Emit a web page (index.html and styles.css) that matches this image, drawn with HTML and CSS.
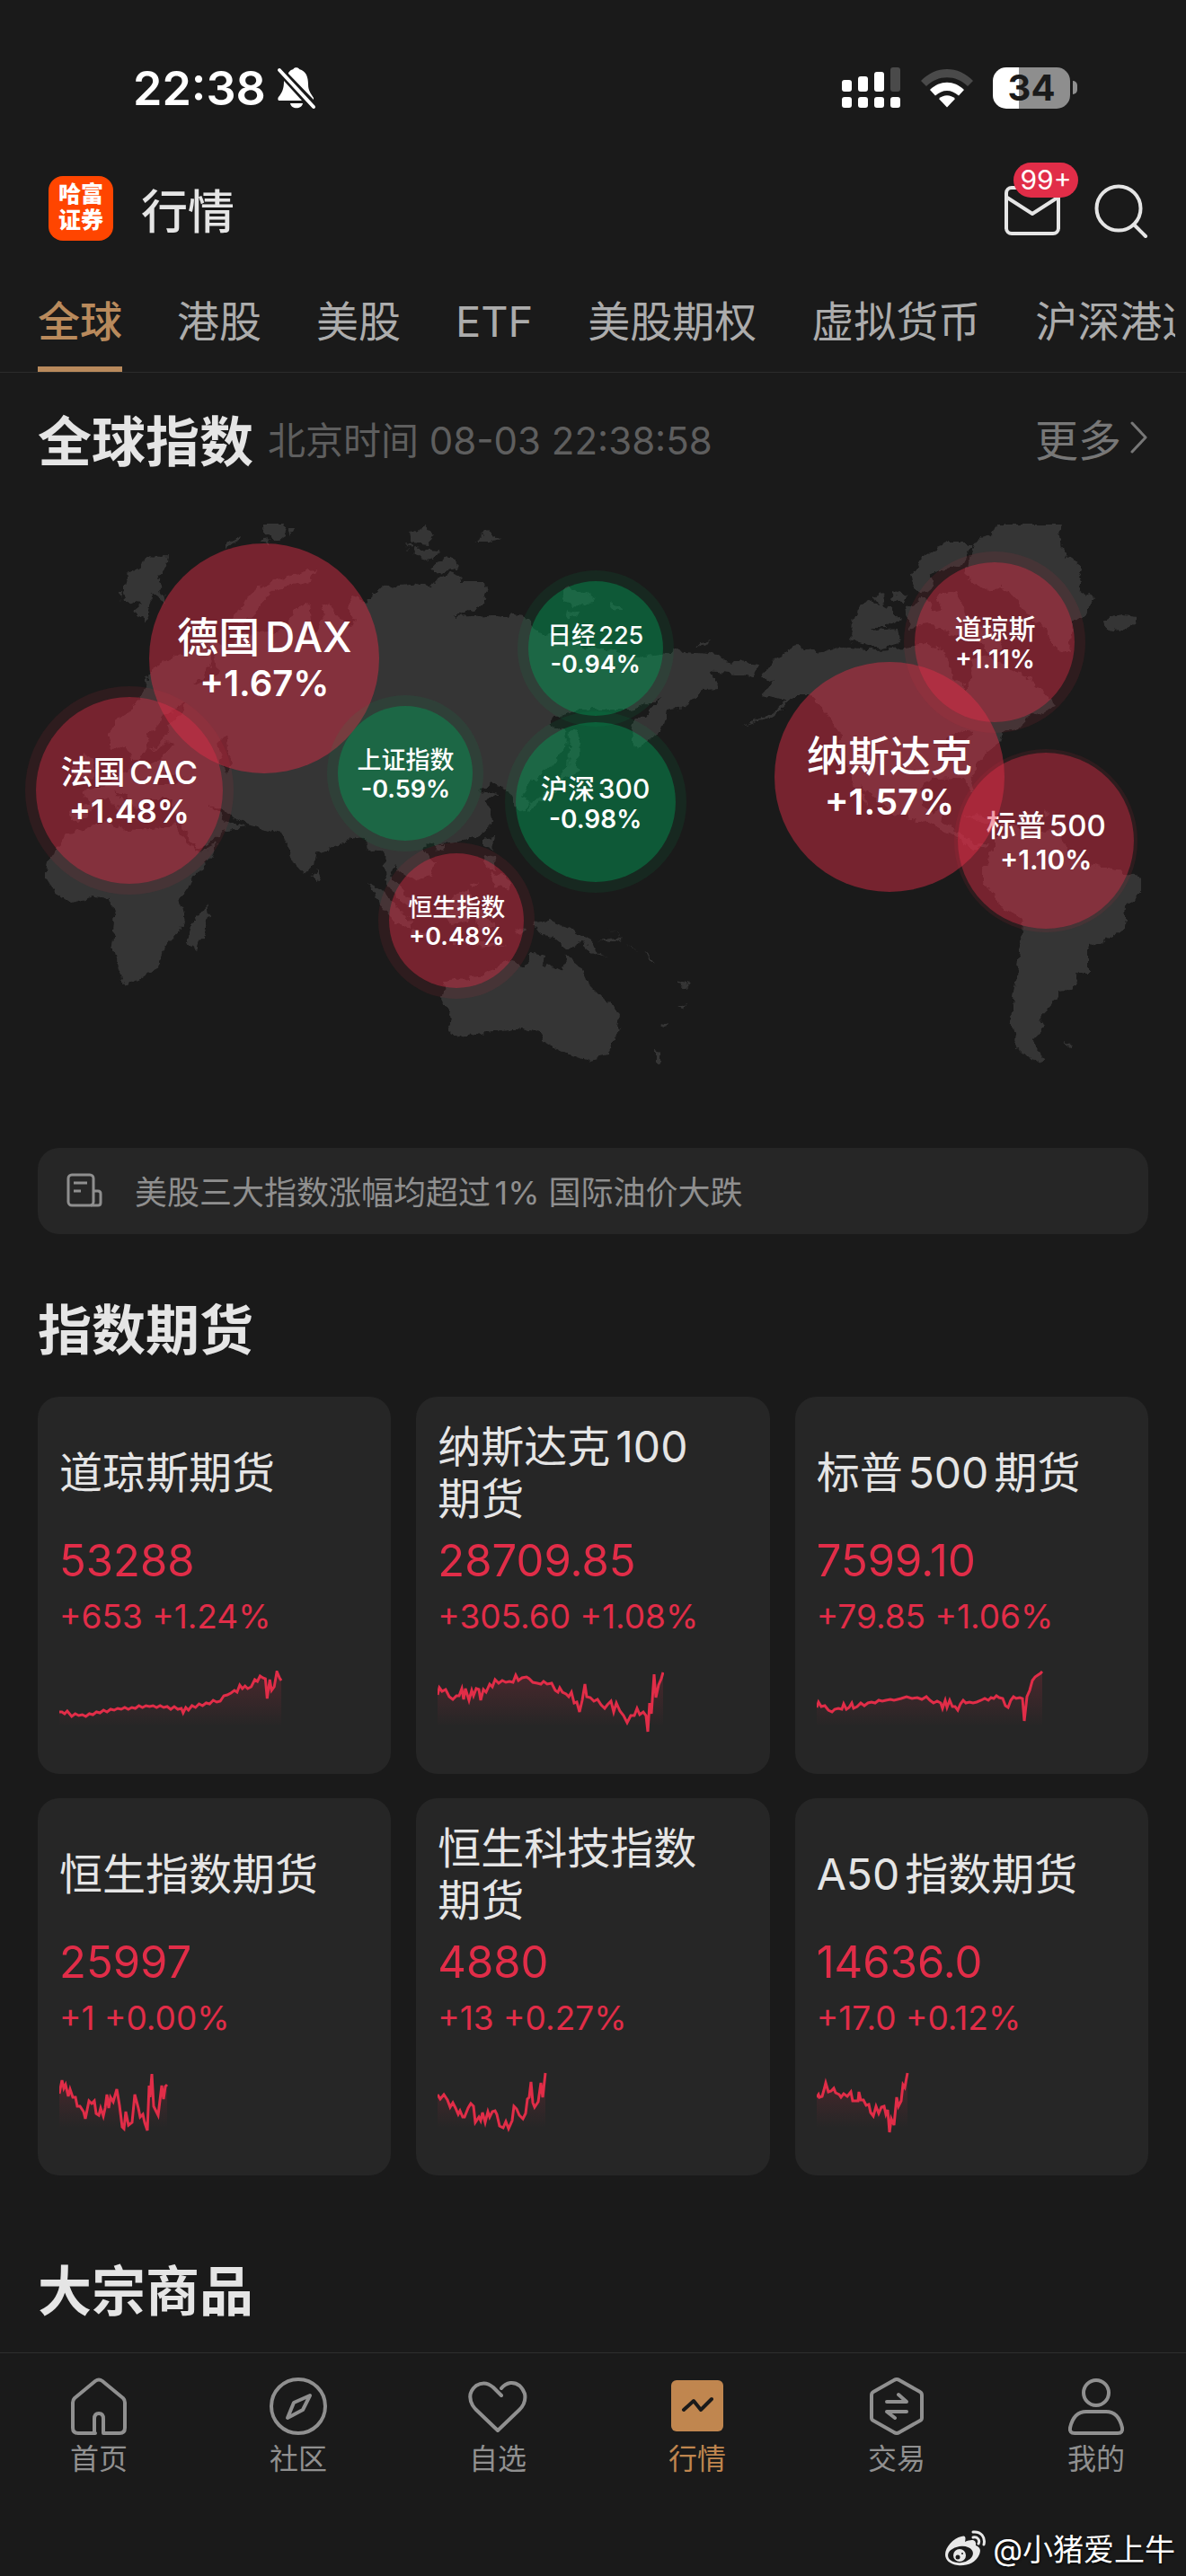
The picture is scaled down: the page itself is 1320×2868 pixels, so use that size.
FILE: index.html
```html
<!DOCTYPE html>
<html lang="zh-CN">
<head>
    <meta charset="UTF-8">
    <meta name="viewport" content="width=device-width, initial-scale=1">
    <title>行情</title>
    <link rel="stylesheet" href="styles.css">
</head>
<body>
    <!-- 状态栏 -->
    <div class="status">
        <div class="status-left">
            <span class="clock">22:38</span>
            <svg class="bell" width="44" height="48" viewBox="0 0 44 48">
                <path fill="#fff" d="M13 7C15 4 17 3.500 18.500 3C19 .5 24.500 .5 25 3C33 5 35 12 35 20C35 27 38 30 41 35V37L13 8Z"/>
                <path fill="#fff" d="M8 16L28 38H3C1 38 1 35.500 2 34C6 29 8 25 8 16ZM15 41H29C28 48 16 48 15 41Z"/>
                <path stroke="#fff" stroke-width="4" stroke-linecap="round" d="M3 4L41 45"/>
            </svg>
        </div>
        <div class="status-right">
            <svg width="66" height="46" viewBox="0 0 66 46">
                <g fill="#fff">
                    <rect x="0" y="14" width="11" height="13" rx="3"/>
                    <rect x="18" y="10" width="11" height="17" rx="3"/>
                    <rect x="36" y="5" width="11" height="22" rx="3"/>
                    <rect x="0" y="33" width="11" height="12" rx="3"/>
                    <rect x="18" y="33" width="11" height="12" rx="3"/>
                    <rect x="36" y="33" width="11" height="12" rx="3"/>
                    <rect x="54" y="33" width="11" height="12" rx="3"/>
                </g>
                <rect x="54" y="0" width="11" height="27" rx="3" fill="#4a4a4a"/>
            </svg>
            <svg width="58" height="44" viewBox="0 0 58 44">
                <path fill="#4a4a4a" d="M0 14C16 -3.500 42 -3.500 58 14L52 20C39 7 19 7 6 20Z"/>
                <path fill="#fff" d="M10 24C21 13 37 13 48 24L42 30.500C34 23 24 23 16 30.500Z"/>
                <path fill="#fff" d="M20 34C25 29 33 29 38 34L29 43.500Z"/>
            </svg>
            <div class="battery"><span>34</span></div>
        </div>
    </div>

    <!-- 顶部标题 -->
    <header class="appbar">
        <div class="logo">哈富<br>证券</div>
        <h1>行情</h1>
        <div class="tools">
            <button class="tool" type="button" aria-label="消息">
                <svg width="62" height="56" viewBox="0 0 62 56" fill="none" stroke="#e5e5e5" stroke-width="4" stroke-linejoin="round">
                    <rect x="2" y="2" width="58" height="51" rx="6"/>
                    <path d="M3 13L31 31L59 13"/>
                </svg>
                <span class="badge">99+</span>
            </button>
            <button class="tool" type="button" aria-label="搜索">
                <svg width="60" height="60" viewBox="0 0 60 60" fill="none" stroke="#e5e5e5" stroke-width="4" stroke-linecap="round">
                    <circle cx="27" cy="27" r="24.500"/>
                    <path d="M44 45L57 58"/>
                </svg>
            </button>
        </div>
    </header>

    <nav class="tabbar">
        <div class="tabs">
            <button class="tab on" type="button">全球</button>
            <button class="tab" type="button">港股</button>
            <button class="tab" type="button">美股</button>
            <button class="tab" type="button">ETF</button>
            <button class="tab" type="button">美股期权</button>
            <button class="tab" type="button">虚拟货币</button>
            <button class="tab" type="button">沪深港通</button>
        </div>
    </nav>

    <main>
        <!-- 全球指数 -->
        <section>
            <div class="sec-head">
                <h2>全球指数</h2>
                <time class="now">北京时间 08-03 22:38:58</time>
                <a class="more" href="#">更多
                    <svg width="20" height="36" viewBox="0 0 20 36" fill="none" stroke="#777" stroke-width="3" stroke-linecap="round" stroke-linejoin="round"><path d="M2 2L17 18L2 34"/></svg>
                </a>
            </div>

            <div class="map">
                <svg class="land" viewBox="0 565 1320 675">
                    <defs>
                        <!-- 海岸线毛边 -->
                        <filter id="coast" x="0" y="0" width="100%" height="100%">
                            <feTurbulence type="fractalNoise" baseFrequency="0.09" numOctaves="3" seed="4"/>
                            <feDisplacementMap in="SourceGraphic" scale="11" xChannelSelector="R" yChannelSelector="G"/>
                        </filter>
                    </defs>
                    <g fill="#363636" filter="url(#coast)">
                        <!-- 欧亚大陆 -->
                        <path d="M168 748L182 738L198 730L227 720L240 714L256 722L262 712L272 706L300 704L318 700L325 684L333 675L345 672L347 690L340 706L352 704L360 690L358 678L368 674L378 688L390 700L396 690L386 676L394 664L410 670L412 663L429 652L455 650L480 653L488 643L501 637L515 642L511 648L541 648L544 660L539 673L522 680L505 687L547 685L566 688L568 684L589 690L598 703L625 708L650 720L680 724L706 732L746 728L752 723L799 727L807 735L843 740L839 753L811 750L790 748L799 767L782 768L761 787L742 790L740 803L736 815L723 823L710 833L702 810L706 800L719 797L736 777L702 790L660 790L644 790L626 795L610 805L631 817L630 832L606 860L588 874L580 886L586 890L587 902L575 904L569 884L549 872L534 880L555 883L539 892L547 900L548 917L534 930L509 937L490 939L472 942L484 963L480 973L463 982L446 970L438 962L434 973L446 987L460 1005L455 1010L440 998L429 980L427 950L421 945L410 947L408 933L391 932L370 943L351 950L349 963L337 973L328 963L314 928L290 922L274 917L253 907L240 898L232 896L252 914L274 921L253 924L234 940L217 947L206 926L198 908L190 904L192 890L165 890L160 896L152 902L140 886L128 882L142 900L136 904L120 888L108 892L98 906L88 916L78 914L80 900L98 898L93 880L112 876L124 868L142 862L148 850L172 850L188 836L196 826L186 824L172 838L162 830L156 846L146 846L138 830L124 836L122 820L130 800L151 787L160 767Z"/>
                        <!-- 非洲 -->
                        <path d="M80 927L118 915L126 918L139 924L168 923L194 919L206 935L217 950L240 940L236 953L215 977L200 1000L206 1027L187 1047L177 1075L156 1090L139 1096L135 1090L125 1053L128 1027L123 1000L105 998L78 1005L59 992L50 977L53 960L65 942Z"/>
                        <path d="M229 1009L233 1018L225 1044L218 1056L209 1050L212 1030Z"/>
                        <path d="M352 966L358 980L352 984L346 976Z"/>
                        <path d="M95 837L104 846L104 866L90 868L94 856ZM84 850L90 854L84 864L78 860Z"/>
                        <!-- 北极岛屿 -->
                        <path d="M162 619L180 620L188 618L186 632L176 645L180 660L184 672L176 664L170 660L166 672L164 692L148 680L158 672L142 670L138 654L142 640L150 632L158 634Z"/>
                        <path d="M132 660L138 660L136 668Z"/>
                        <path d="M293 583H314L318 596L308 604L294 592ZM320 588L328 588L324 596ZM250 606L268 597L266 602L250 610ZM288 602L300 600L298 605Z"/>
                        <path d="M261 690L272 668L285 655L310 645L351 633L345 646L320 652L300 662L282 682L270 694Z"/>
                        <path d="M456 594L474 587L482 598L478 606L458 604ZM450 604L458 606L456 611ZM458 610L488 613L482 624L464 618ZM480 634L498 618L511 632L494 636ZM530 604L544 590L556 600L542 604Z"/>
                        <path d="M624 660L632 652L650 660L662 668L640 674L628 670ZM676 670L692 674L696 680L682 678ZM630 680L645 684L632 690ZM775 717L792 711L790 716L776 720Z"/>
                        <!-- 格陵兰 / 北美 -->
                        <path d="M1110 583H1182L1180 596L1182 610L1190 622L1207 633L1199 653L1218 667L1207 684L1193 694L1190 727L1172 720L1164 700L1150 690L1130 665L1115 655L1095 657L1074 640L1085 603L1104 596Z"/>
                        <path d="M1022 627L1036 613L1056 605L1083 605L1070 630L1046 634L1026 643ZM1012 640L1024 630L1042 648L1034 662L1018 658Z"/>
                        <path d="M952 682L966 668L990 676L1002 690L986 698L964 698L946 706ZM948 694L960 690L975 702L998 700L1004 716L980 722L946 712ZM996 658L1010 664L1006 674L994 668ZM972 664L984 660L980 674ZM1008 676L1028 664L1040 680L1060 676L1070 696L1052 702L1030 694L1012 700Z"/>
                        <path d="M1042 664L1064 658L1080 690L1104 700L1116 722L1100 728L1082 712L1058 706Z"/>
                        <path d="M858 740L872 726L887 720L913 728L938 720L974 724L1009 722L1030 716L1050 724L1056 736L1060 756L1076 768L1084 752L1080 734L1100 730L1122 744L1140 752L1161 770L1175 787L1160 792L1142 800L1136 812L1115 814L1110 828L1098 837L1090 850L1081 862L1086 882L1078 876L1070 866L1039 867L1026 873L1026 900L1040 904L1052 898L1048 916L1072 927L1082 940L1098 938L1096 944L1080 944L1064 930L1030 915L997 907L975 892L960 874L966 898L950 874L946 860L936 836L934 817L921 793L900 773L887 773L862 797L828 808L862 792L875 780L849 773L860 760L849 753Z"/>
                        <path d="M1070 908L1090 906L1108 914L1096 916ZM1112 918L1134 918L1128 924L1112 922ZM1160 900L1170 906L1164 910Z"/>
                        <path d="M1226 692L1248 684L1264 686L1262 698L1240 702L1230 700Z"/>
                        <!-- 南美 -->
                        <path d="M1106 933L1127 920L1150 926L1182 923L1186 943L1211 963L1249 970L1270 977L1270 993L1253 1010L1251 1033L1237 1043L1211 1053L1211 1083L1194 1082L1199 1093L1190 1101L1178 1102L1178 1110L1171 1118L1157 1133L1163 1143L1150 1157L1152 1166L1163 1177L1152 1182L1132 1166L1127 1150L1125 1133L1131 1093L1136 1053L1140 1023L1119 1013L1093 980L1093 967L1106 947Z"/>
                        <path d="M1184 1160L1192 1162L1188 1166Z"/>
                        <!-- 东南亚 / 大洋洲 -->
                        <path d="M410 984L422 990L440 1008L460 1028L456 1034L436 1020L422 1004ZM458 1036L484 1042L480 1046L460 1042Z"/>
                        <path d="M496 1006L510 994L524 990L526 1006L520 1026L504 1030L492 1020Z"/>
                        <path d="M534 1012L552 1006L540 1020L550 1034L540 1030L536 1040L530 1026ZM540 952L550 954L552 970L544 968ZM546 972L564 976L568 992L554 986ZM540 936L550 930L546 944L540 942ZM482 940L494 940L488 948ZM522 984L534 980L526 988Z"/>
                        <path d="M594 1028L612 1024L640 1036L658 1046L666 1062L677 1066L660 1062L648 1050L632 1058L616 1044L604 1042ZM500 1048L540 1048L566 1052L540 1054ZM574 1034L584 1036L580 1040Z"/>
                        <path d="M666 1048L690 1044L676 1034L692 1046L680 1050ZM698 1050L704 1054L710 1060ZM716 1058L724 1066L732 1074L724 1070ZM754 1092L764 1094L766 1100L758 1098ZM754 1120L762 1116L760 1122ZM734 1140L744 1136L742 1142Z"/>
                        <path d="M494 1093L534 1087L551 1077L566 1071L583 1075L593 1062L606 1064L604 1072L625 1083L631 1062L644 1073L652 1092L677 1117L690 1130L687 1150L675 1175L652 1180L635 1175L619 1167L606 1158L600 1150L590 1147L581 1145L543 1150L511 1154L498 1148L503 1133L492 1110Z"/>
                        <path d="M730 1168L736 1170L736 1184L730 1186Z"/>
                        <!-- 日本 -->
                        <path d="M634 814L644 812L646 838L640 850L646 860L628 866L622 880L602 892L590 904L588 896L612 880L632 856Z"/>
                    </g>
                    <!-- 内海 -->
                    <g fill="#1a1a1a" filter="url(#coast)">
                        <path d="M160 830L170 812L184 796L206 782L206 790L188 806L184 820L172 836Z"/>
                        <path d="M214 762L228 752L236 734L228 720L240 728L242 752L226 760Z"/>
                        <path d="M242 828L252 818L254 836L260 850L250 862L246 844Z"/>
                        <path d="M174 866L186 858L204 866L192 874L176 874Z"/>
                        <path d="M1046 826L1064 814L1084 816L1074 824L1062 832Z"/>
                    </g>
                </svg>

                <a class="dot up p2" href="#" style="left:88.200%;top:55%"><b>标普500</b><span>+1.10%</span></a>
                <a class="dot up p1" href="#" style="left:75%;top:44.500%"><b>纳斯达克</b><span>+1.57%</span></a>
                <a class="dot up p3" href="#" style="left:83.900%;top:22.200%"><b>道琼斯</b><span>+1.11%</span></a>
                <a class="dot up p1" href="#" style="left:22.300%;top:24.900%"><b>德国DAX</b><span>+1.67%</span></a>
                <a class="dot up p4" href="#" style="left:10.900%;top:46.600%"><b>法国CAC</b><span>+1.48%</span></a>
                <a class="dot down p5" href="#" style="left:34.200%;top:43.900%"><b>上证指数</b><span>-0.59%</span></a>
                <a class="dot down p5" href="#" style="left:50.200%;top:23.300%"><b>日经225</b><span>-0.94%</span></a>
                <a class="dot down p3" href="#" style="left:50.200%;top:48.600%"><b>沪深300</b><span>-0.98%</span></a>
                <a class="dot up p5" href="#" style="left:38.500%;top:68.100%"><b>恒生指数</b><span>+0.48%</span></a>
            </div>

            <a class="news" href="#">
                <svg width="40" height="38" viewBox="0 0 40 38" fill="none" stroke="#8f8f8f" stroke-width="3" stroke-linejoin="round">
                    <rect x="2" y="2" width="28" height="34" rx="4"/>
                    <path d="M30 20H35Q38 20 38 23V33Q38 36 35 36H27M8 11H23M8 20H16"/>
                </svg>
                <span>美股三大指数涨幅均超过1% 国际油价大跌</span>
            </a>
        </section>

        <!-- 指数期货 -->
        <section>
            <h2 class="sec-title">指数期货</h2>
            <svg class="defs" width="0" height="0">
                <linearGradient id="fade" x1="0" y1="0" x2="0" y2="62" gradientUnits="userSpaceOnUse">
                    <stop offset="0" stop-color="#e12d48" stop-opacity=".2"/>
                    <stop offset="1" stop-color="#e12d48" stop-opacity="0"/>
                </linearGradient>
            </svg>
            <div class="cards">
                <a class="card" href="#">
                    <h3>道琼斯期货</h3>
                    <p class="price">53288</p>
                    <p class="chg">+653 +1.24%</p>
                    <svg class="spark" width="252" height="70" viewBox="0 0 256 70" preserveAspectRatio="none"><polyline points="0,46 3,46 6,48 9,45 14,51 18,48 22,50 26,49 30,51 34,48 38,49 42,46 46,47 50,44 54,46 58,43 62,44 66,42 70,43 74,41 78,43 82,41 86,42 90,39 94,41 98,39 102,40 106,39 110,41 114,39 118,41 122,40 126,43 130,40 134,43 138,42 140,47 143,41 146,44 150,39 154,41 158,37 162,39 166,36 170,37 174,33 178,35 182,34 186,28 190,27 194,25 198,22 201,24 204,16 207,20 210,17 213,20 217,18 221,10 224,12 227,6 230,8 233,9 235,31 238,10 240,22 243,18 246,1 249,8 251,11"/></svg>
                </a>
                <a class="card" href="#">
                    <h3>纳斯达克100期货</h3>
                    <p class="price">28709.85</p>
                    <p class="chg">+305.60 +1.08%</p>
                    <svg class="spark" width="252" height="70" viewBox="0 0 252 70"><polyline points="0,27 2,19 5,23 9,21 13,29 17,32 21,28 24,28 27,20 29,32 31,20 35,33 38,22 40,28 43,20 46,21 48,33 51,21 54,24 58,15 61,18 64,10 68,14 72,11 76,13 80,12 84,13 87,5 90,11 94,8 99,7 102,9 106,13 111,14 115,15 118,12 122,15 127,14 131,22 134,24 136,19 139,24 143,26 146,29 149,24 152,36 155,35 158,46 161,33 164,15 166,29 170,30 174,34 178,32 182,38 186,42 189,38 193,34 196,46 199,36 203,45 207,50 211,58 215,50 219,50 222,42 225,49 229,46 232,50 234,68 236,36 238,48 241,4 243,30 246,16 249,9 251,2"/></svg>
                </a>
                <a class="card" href="#">
                    <h3>标普500期货</h3>
                    <p class="price">7599.10</p>
                    <p class="chg">+79.85 +1.06%</p>
                    <svg class="spark" width="252" height="70" viewBox="0 0 252 70"><polyline points="0,41 2,35 5,40 9,39 13,44 17,46 20,43 24,42 28,43 30,37 33,43 36,41 39,36 41,42 45,40 49,36 53,39 57,36 61,35 65,36 69,33 73,34 77,33 82,32 86,33 90,32 94,31 100,29 106,31 112,30 117,32 122,29 126,33 130,36 134,34 138,36 140,42 143,33 145,41 148,33 151,40 154,40 157,44 160,37 163,33 166,36 170,35 174,36 178,35 183,33 187,31 191,33 194,30 197,31 200,28 203,30 207,31 210,39 213,41 216,33 219,29 222,31 226,30 229,31 231,56 234,29 237,22 240,11 243,7 246,5 249,3 251,1"/></svg>
                </a>
                <a class="card" href="#">
                    <h3>恒生指数期货</h3>
                    <p class="price">25997</p>
                    <p class="chg">+1 +0.00%</p>
                    <svg class="spark" width="252" height="70" viewBox="0 0 252 70"><polyline points="0,24 3,9 5,18 7,14 10,27 12,19 15,28 18,28 20,38 23,38 27,44 29,52 33,32 36,35 39,32 41,46 44,48 46,40 49,49 51,40 53,25 55,40 57,28 60,33 64,19 67,37 70,61 72,63 74,44 77,59 81,56 84,25 88,40 90,50 93,47 95,56 98,65 100,15 101,28 103,2 105,38 107,42 110,48 114,15 116,30 118,16 120,14"/></svg>
                </a>
                <a class="card" href="#">
                    <h3>恒生科技指数期货</h3>
                    <p class="price">4880</p>
                    <p class="chg">+13 +0.27%</p>
                    <svg class="spark" width="252" height="70" viewBox="0 0 252 70"><polyline points="0,25 3,30 7,25 11,31 14,39 17,34 20,40 23,47 25,43 28,50 30,50 34,40 37,35 40,38 42,56 46,50 48,54 50,45 53,56 56,44 58,50 61,44 64,43 66,47 69,60 73,62 76,55 79,63 83,54 85,38 88,41 91,48 95,52 98,46 100,30 102,28 104,11 106,34 108,39 112,33 115,12 117,28 120,1"/></svg>
                </a>
                <a class="card" href="#">
                    <h3>A50指数期货</h3>
                    <p class="price">14636.0</p>
                    <p class="chg">+17.0 +0.12%</p>
                    <svg class="spark" width="252" height="70" viewBox="0 0 252 70"><polyline points="0,28 2,25 3,28 6,27 8,20 10,12 13,22 16,21 19,18 21,23 25,25 27,28 30,24 34,27 38,22 40,32 44,32 46,32 47,22 49,31 52,31 55,37 58,36 60,45 63,49 66,38 69,46 72,39 75,38 77,47 79,42 81,67 83,52 86,59 89,28 91,38 94,32 96,14 98,17 101,1"/></svg>
                </a>
            </div>
        </section>

        <h2 class="sec-title">大宗商品</h2>
    </main>

    <!-- 底部导航 -->
    <nav class="bottom">
        <a class="item" href="#">
            <svg viewBox="0 0 66 66"><path d="M29 63H10Q4 63 4 57V29Q4 26 6 24L29 5Q33 2 37 5L60 24Q62 26 62 29V57Q62 63 56 63H38V47Q38 41 33 41Q28 41 28 47V63"/></svg>
            首页
        </a>
        <a class="item" href="#">
            <svg viewBox="0 0 66 66"><circle cx="33" cy="33" r="30"/><path d="M46 21L28 29L21 46L38 37Z"/></svg>
            社区
        </a>
        <a class="item" href="#">
            <svg viewBox="0 0 66 66"><path d="M37 21L28 12Q19 4 9 10Q-2 19 5 32Q7 35 9 37L33 60L57 37Q65 29 63 19Q58 6 47 7Q41 8 37 13"/></svg>
            自选
        </a>
        <a class="item on" href="#">
            <svg viewBox="0 0 66 66"><rect x="4" y="4" width="58" height="57" rx="6" fill="#c0864f" stroke="none"/><path stroke="#1a1a1a" d="M18 37L29 27L37 37L49 25"/></svg>
            行情
        </a>
        <a class="item" href="#">
            <svg viewBox="0 0 66 66"><path d="M30 4Q33 2 36 4L59 17Q61 18 61 21V46Q61 48 59 49L36 62Q33 64 30 62L7 49Q5 48 5 46V21Q5 18 7 17ZM22 28H44L35 20M44 39H22L31 46"/></svg>
            交易
        </a>
        <a class="item" href="#">
            <svg viewBox="0 0 66 66"><circle cx="33" cy="18" r="14"/><path d="M22 39H44Q58 39 62 57Q63 63 57 63H9Q3 63 4 57Q8 39 22 39Z"/></svg>
            我的
        </a>
    </nav>

    <footer class="mark">
        <svg width="46" height="40" viewBox="0 0 46 40">
            <path fill="#e8e8e8" d="M18 7C23 5 23 9 22 13C29 10 35 10 34 17C39 19 40 22 38 27C34 37 23 40 14 39C5 38 0 33 0 27C0 19 9 9 18 7Z"/>
            <ellipse cx="17" cy="27" rx="14" ry="9" fill="#1a1a1a" transform="rotate(-8 17 27)"/>
            <circle cx="16" cy="28" r="7" fill="#e8e8e8"/>
            <circle cx="14" cy="30" r="2.500" fill="#1a1a1a"/><circle cx="19" cy="26" r="1" fill="#1a1a1a"/>
            <path fill="none" stroke="#e8e8e8" stroke-width="3" stroke-linecap="round" d="M31 2C40 1 45 8 43 16M31 8C36 7 39 11 37 15"/>
        </svg>
        <span>@小猪爱上牛</span>
    </footer>

    <script src="script.js"></script>
</body>
</html>
```

FILE: styles.css
```css
*{
    box-sizing: border-box;
}

body{
    display: flex;
    flex-direction: column;
    min-height: 100vh;
    margin: 0;
    background: #1a1a1a;
    color: #e5e5e5;
    font-family: Inter, "Noto Sans CJK SC", sans-serif;
    text-autospace: normal;
    overflow-x: hidden;
}

h1, h2, h3, p{
    margin: 0;
}

a{
    color: inherit;
    text-decoration: none;
}

button{
    padding: 0;
    border: 0;
    background: none;
    color: inherit;
    font: inherit;
}

svg{
    display: block;
    flex-shrink: 0;
}

/* 状态栏 */
.status{
    display: flex;
    justify-content: space-between;
    align-items: center;
    height: 150px;
    padding: 46px 122px 0 148px;
    color: #fff;
}

.status-left{
    display: flex;
    align-items: center;
    gap: 12px;
}

.status-right{
    display: flex;
    align-items: center;
    gap: 22px;
}

.clock{
    font-size: 52px;
    font-weight: 600;
}

.battery{
    position: relative;
    width: 86px;
    height: 46px;
    margin-right: 7px;
    border-radius: 15px;
    background: linear-gradient(90deg, #fff 34%, #8e8e8e 34%);
    color: #1a1a1a;
    font-size: 40px;
    font-weight: 700;
    line-height: 46px;
    text-align: center;
}

/* 电池头 */
.battery::after{
    content: "";
    position: absolute;
    top: 15px;
    right: -8px;
    width: 5px;
    height: 15px;
    border-radius: 0 5px 5px 0;
    background: #8e8e8e;
}

/* 顶部标题 */
.appbar{
    display: flex;
    align-items: center;
    height: 170px;
    padding: 0 42px 6px 54px;
}

.logo{
    width: 72px;
    height: 72px;
    padding-top: 6px;
    border-radius: 16px;
    background: #ff4500;
    color: #fff;
    font-size: 25px;
    font-weight: 900;
    line-height: 29px;
    text-align: center;
}

.appbar h1{
    margin-left: 31px;
    font-size: 52px;
    font-weight: 500;
}

.tools{
    display: flex;
    align-items: center;
    gap: 38px;
    margin-left: auto;
    padding-top: 6px;
}

.tool{
    position: relative;
}

.badge{
    position: absolute;
    top: -26px;
    left: 10px;
    width: 72px;
    height: 39px;
    border-radius: 20px;
    background: #e12d48;
    color: #fff;
    font-size: 30px;
    line-height: 39px;
    text-align: center;
}

/* 分类标签 */
.tabbar{
    padding-right: 12px;
    border-bottom: 1px solid #2b2b2b;
}

.tabs{
    display: flex;
    gap: 61px;
    padding-left: 42px;
    overflow: hidden;
}

.tab{
    flex-shrink: 0;
    height: 94px;
    padding-bottom: 18px;
    color: #acacac;
    font-size: 47px;
    line-height: 76px;
}

.tab.on{
    background: linear-gradient(#b98a5c, #b98a5c) bottom/100% 6px no-repeat;
    color: #b98a5c;
    font-weight: 500;
}

/* 区块标题 */
.sec-head{
    display: flex;
    align-items: center;
    height: 150px;
    padding: 0 42px 6px;
}

.sec-head h2,
.sec-title{
    font-size: 60px;
    font-weight: 600;
}

.sec-title{
    padding: 63px 42px 23px;
    line-height: 89px;
}

.now{
    margin-left: 16px;
    color: #5e5e5e;
    font-size: 42px;
}

.more{
    display: flex;
    align-items: center;
    gap: 10px;
    margin-left: auto;
    color: #777;
    font-size: 48px;
}

/* 世界地图 */
.map{
    position: relative;
}

.land{
    width: 100%;
}

.dot{
    position: absolute;
    display: flex;
    flex-direction: column;
    align-items: center;
    justify-content: center;
    padding-top: 4px;
    border-radius: 50%;
    color: #fff;
    white-space: nowrap;
    transform: translate(-50%, -50%);
}

.dot b{
    font-weight: 500;
}

.dot span{
    font-weight: 600;
}

.up{
    background: rgba(226, 45, 72, .46);
    box-shadow: 0 0 0 12px rgba(226, 45, 72, .1);
}

.down{
    background: rgba(0, 163, 89, .46);
    box-shadow: 0 0 0 12px rgba(0, 163, 89, .1);
}

.p1{
    width: 256px;
    height: 256px;
    box-shadow: none;
    font-size: 46px;
    line-height: 52px;
}
.p1 span{
    font-size: 40px;
}

.p2{
    width: 196px;
    height: 196px;
    box-shadow: 0 0 0 4px rgba(226, 45, 72, .1);
    font-size: 33px;
    line-height: 38px;
}
.p2 span{
    font-size: 30px;
}

.p3{
    width: 178px;
    height: 178px;
    font-size: 30px;
    line-height: 34px;
}
.p3 span{
    font-size: 28px;
}

.p4{
    width: 208px;
    height: 208px;
    font-size: 36px;
    line-height: 43px;
}

.p5{
    width: 150px;
    height: 150px;
    font-size: 27px;
    line-height: 32px;
}

/* 快讯 */
.news{
    display: flex;
    align-items: center;
    gap: 36px;
    height: 96px;
    margin: 38px 42px 0;
    padding: 0 32px 2px;
    border-radius: 24px;
    background: #262626;
    color: #8f8f8f;
    font-size: 36px;
}

/* 期货卡片 */
.defs{
    position: absolute;
}

.cards{
    display: grid;
    grid-template-columns: repeat(3, 1fr);
    gap: 27px 28px;
    margin: 6px 0 22px;
    padding: 0 42px;
}

.card{
    padding: 27px 24px 45px;
    border-radius: 24px;
    background: #262626;
}

.card h3{
    display: flex;
    align-items: center;
    height: 116px;
    padding-right: 24px;
    font-size: 48px;
    font-weight: 400;
    line-height: 58px;
}

.price{
    margin-top: 10px;
    color: #e12d48;
    font-size: 49px;
    line-height: 60px;
}

.chg{
    margin-top: 8px;
    color: #e12d48;
    font-size: 37px;
    line-height: 48px;
    white-space: nowrap;
}

.spark{
    margin-top: 36px;
}

.spark polyline{
    fill: none;
    stroke: #e12d48;
    stroke-width: 3;
}

.spark polygon{
    fill: url(#fade);
}

/* 底部导航 */
.bottom{
    display: flex;
    justify-content: space-between;
    margin-top: auto;
    padding: 26px 67px 0 77px;
    border-top: 1px solid #2e2e2e;
}

.item{
    display: flex;
    flex-direction: column;
    align-items: center;
    gap: 6px;
    width: 66px;
    color: #909090;
    font-size: 32px;
    line-height: 40px;
    white-space: nowrap;
}

.item svg{
    width: 66px;
    height: 66px;
    fill: none;
    stroke: #909090;
    stroke-width: 4;
    stroke-linecap: round;
    stroke-linejoin: round;
}

.item.on{
    color: #c0864f;
}

/* 水印 */
.mark{
    display: flex;
    align-items: center;
    justify-content: flex-end;
    gap: 7px;
    height: 110px;
    padding: 47px 12px 0 0;
    color: #fff;
    font-size: 34px;
    text-autospace: no-autospace;
    text-shadow: 0 1px 3px #000;
}
```

FILE: script.js
```js
// 折线下方的渐变面积
document.querySelectorAll('.spark polyline').forEach(function (line) {
    var pts = line.getAttribute('points').trim();
    var lastX = pts.split(' ').pop().split(',')[0];
    var area = document.createElementNS('http://www.w3.org/2000/svg', 'polygon');
    area.setAttribute('points', pts + ' ' + lastX + ',70 0,70');
    line.parentNode.insertBefore(area, line);
});
```
